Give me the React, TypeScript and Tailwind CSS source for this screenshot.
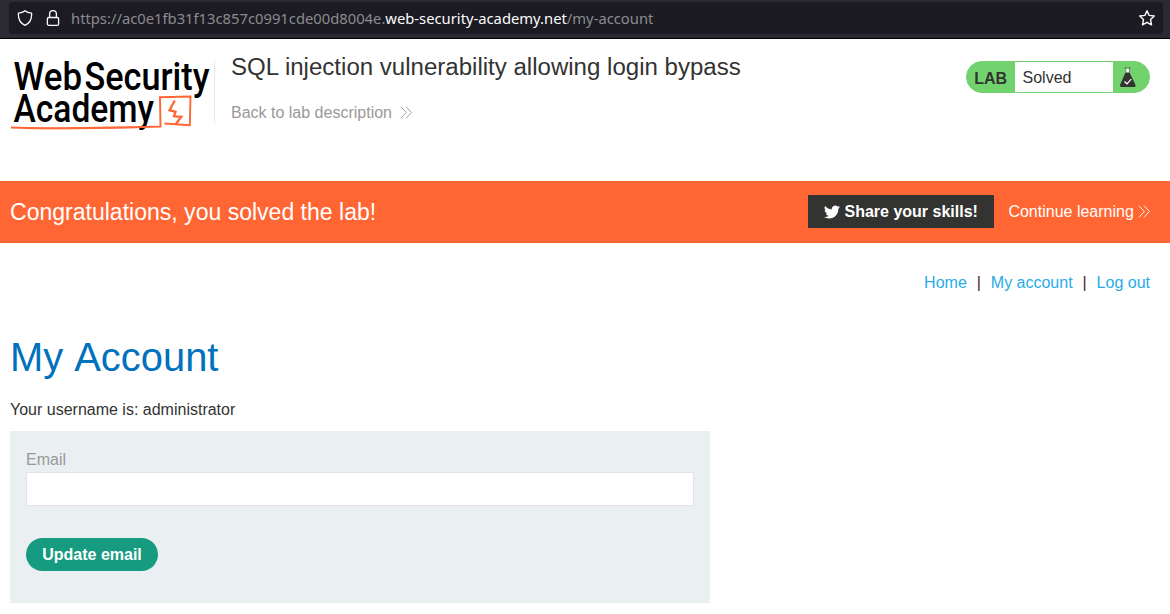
import React from "react";

function AddressBar() {
  return (
    <div className="h-[39px] bg-[#2b2a33] border-b border-black pt-[2px] pl-[9px] pr-[7px]">
      <div className="h-8 rounded-[4px] bg-[#1c1b22] flex items-center pl-2 pr-[7px]">
        <svg className="w-4 h-4 shrink-0" viewBox="0 0 16 16" fill="none" stroke="#fbfbfe" strokeWidth="1.3" strokeLinejoin="round">
          <path d="M8 .8C9.500 2.200 11.800 3 14.600 3.200 15 8.500 12.500 13.200 8 15.300 3.500 13.200 1 8.500 1.400 3.200 4.200 3 6.500 2.200 8 .8z" />
        </svg>
        <svg className="w-4 h-4 shrink-0 ml-3" viewBox="0 0 16 16" fill="none" stroke="#fbfbfe" strokeWidth="1.3">
          <rect x="2.400" y="7.500" width="11.200" height="7.800" rx="1.400" />
          <path d="M4.600 7.500V4a3.400 3.400 0 0 1 6.800 0v3.500" />
        </svg>
        <div className="ml-[10px] flex-1 whitespace-nowrap font-['Noto_Sans',sans-serif] text-[14.780px] leading-8 text-[#8b8b90]">
          https://ac0e1fb31f13c857c0991cde00d8004e.<span className="text-[#fbfbfe]">web-security-academy.net</span>/my-account
        </div>
        <svg className="w-[18px] h-[18px] shrink-0" viewBox="0 0 18 18" fill="none" stroke="#fbfbfe" strokeWidth="1.400" strokeLinejoin="round">
          <path d="M9 1.700 11.100 6.400 16.300 7 12.500 10.500 13.500 15.900 9 13.300 4.500 15.900 5.500 10.500 1.700 7 6.900 6.400z" />
        </svg>
      </div>
    </div>
  );
}

function Logo() {
  return (
    <svg className="w-[204px] h-[88px] shrink-0" viewBox="10 49 204 88" aria-label="Web Security Academy">
      <g fontFamily="Roboto, sans-serif" fontWeight="500" fontSize="38">
        <text x="13.500" y="89.500" textLength="68.500" lengthAdjust="spacingAndGlyphs">Web</text>
        <text x="84.500" y="89.500" textLength="125" lengthAdjust="spacingAndGlyphs">Security</text>
        <text x="13.500" y="122.300" textLength="140.500" lengthAdjust="spacingAndGlyphs">Academy</text>
      </g>
      <g fill="none" stroke="#ff6633" strokeWidth="2">
        <path d="M11 127.500C45 129 85 128.300 160.500 126.500L160 97.200 190.500 96.500 189.800 125.200 164.500 123.500" strokeWidth="1.900" />
        <path d="M24 128.500Q60 129.500 138 127.600" strokeWidth="1" />
        <path d="M174.800 100.500 169.500 110.200 175.500 111.800 174 116.300 181.300 116.800 175.500 124.500" strokeWidth="2.300" />
      </g>
    </svg>
  );
}

function Chevrons({ className }: { className: string }) {
  return (
    <svg className={className} viewBox="0 0 12 13" fill="none" stroke="currentColor" strokeWidth="0.900">
      <path d="M.8.700 6.300 6.500.8 12.300M6 .700 11.500 6.500 6 12.300" />
    </svg>
  );
}

function LabStatus() {
  return (
    <div className="mt-[22px] flex h-8 w-[184px] overflow-hidden rounded-full border border-[#72d36e] bg-[#72d36e]">
      <span className="w-12 pl-[7.200px] font-bold leading-[33px]">LAB</span>
      <span className="w-[98px] bg-white pl-[7.500px] leading-[31px]">Solved</span>
      <svg className="ml-[6px] mt-[5px] h-[21px] w-[18px]" viewBox="0 0 18 21">
        <path d="M6.500 1.500h4v4.500h-4z" fill="#fff" />
        <path d="M6.500 5.500h4L16.500 18q.5 2-1 2h-13Q.5 20 1 18z" fill="#333332" />
        <path d="M5.500.900h1.300v5M11.700.900h-1.300v5M6 .900h5" fill="none" stroke="#52704f" strokeWidth=".8" />
        <path d="m5.500 14.500 2.500 2.300 4.200-4.600" fill="none" stroke="#fff" strokeWidth="1.200" />
      </svg>
    </div>
  );
}

export default function App() {
  return (
    <div className="h-[614px] overflow-hidden bg-white font-['Liberation_Sans',sans-serif] text-base text-[#333332]">
      <AddressBar />
      <header className="flex h-[142px] pl-[10px] pr-5">
        <div className="pt-[10px]"><Logo /></div>
        <div className="mt-[22px] h-[62px] w-px bg-[#e6e6e6]" />
        <div className="ml-4 flex-1 pt-3">
          <h2 className="text-[24.060px] leading-8">SQL injection vulnerability allowing login bypass</h2>
          <a className="mt-[18px] flex items-center leading-6 text-[#999]">
            Back to lab description
            <Chevrons className="-mt-px ml-[8.500px] h-[13px] w-3" />
          </a>
        </div>
        <LabStatus />
      </header>
      <section className="flex h-[62px] items-center bg-[#ff6633] pl-[10px] pr-[19.500px] text-white">
        <p className="flex-1 text-[23.040px]">Congratulations, you solved the lab!</p>
        <button className="mb-px flex h-[33px] w-[186px] items-center bg-[#333332] pl-4 font-bold whitespace-nowrap">
          <svg className="mr-[4.400px] h-4 w-4" viewBox="0 0 24 24" fill="currentColor">
            <path d="M23.950 4.570a10 10 0 0 1-2.820.780 4.960 4.960 0 0 0 2.160-2.720 9.900 9.900 0 0 1-3.120 1.190 4.920 4.920 0 0 0-8.380 4.480C7.690 8.100 4.070 6.130 1.640 3.160a4.920 4.920 0 0 0 1.520 6.570 4.900 4.900 0 0 1-2.230-.610v.060a4.920 4.920 0 0 0 3.950 4.830 5 5 0 0 1-2.210.080 4.940 4.940 0 0 0 4.600 3.420A9.870 9.870 0 0 1 0 19.540a13.990 13.990 0 0 0 7.550 2.210c9.050 0 14-7.500 14-13.980 0-.210 0-.420-.020-.630a9.940 9.940 0 0 0 2.420-2.570z" />
          </svg>
          Share your skills!
        </button>
        <a className="ml-[14.300px] flex items-center whitespace-nowrap">
          Continue learning
          <Chevrons className="-mt-px ml-[4.300px] mr-[.4px] h-[13px] w-3" />
        </a>
      </section>
      <nav className="flex h-[78px] justify-end pr-5 pt-[28px] leading-6 text-[#29abe8]">
        <a>Home</a>
        <span className="w-6 text-center text-[#4a2026]">|</span>
        <a>My account</a>
        <span className="w-6 text-center text-[#4a2026]">|</span>
        <a>Log out</a>
      </nav>
      <main className="pl-[10px]">
        <h1 className="h-[77px] pt-[12px] text-[39.900px] leading-[48px] text-[#0071bc] [font-kerning:none]">My Account</h1>
        <p className="h-[33px] leading-6">Your username is: administrator</p>
        <form className="h-[172px] w-[700px] bg-[#eaeff2] px-4 pt-[17px]">
          <label className="block h-6 leading-6 text-[#999]">Email</label>
          <input className="block h-[34px] w-full border border-[#e4e4e4] bg-white" />
          <button type="button" className="mt-8 h-[33px] w-[132px] rounded-full bg-[#179b80] font-bold text-white">Update email</button>
        </form>
      </main>
    </div>
  );
}
